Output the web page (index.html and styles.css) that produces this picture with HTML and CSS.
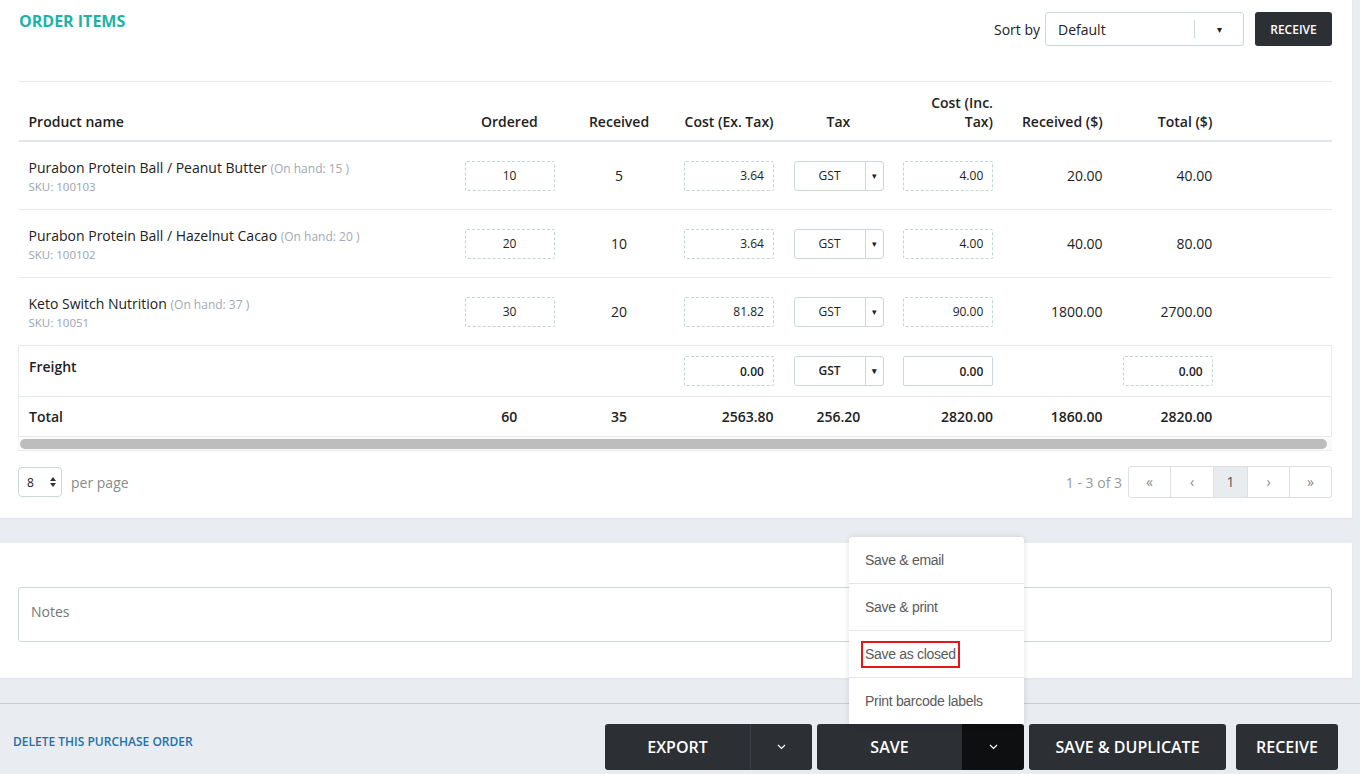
FILE: index.html
```html
<!DOCTYPE html>
<html lang="en">
<head>
	<meta charset="UTF-8">
	<title>Purchase order</title>
	<link rel="stylesheet" href="styles.css">
</head>
<body>
	<div class="card items-card">
		<div class="card-head">
			<h2 class="title">ORDER ITEMS</h2>
			<div class="head-tools">
				<span class="sort-label">Sort by</span>
				<div class="sort-select">
					<span class="sort-value">Default</span>
					<span class="sort-split"></span>
					<span class="caret">&#9662;</span>
				</div>
				<button class="btn-dark btn-small">RECEIVE</button>
			</div>
		</div>

		<table class="items-table">
			<colgroup>
				<col class="col-name">
				<col class="col-num"><col class="col-num"><col class="col-num"><col class="col-num">
				<col class="col-num"><col class="col-num"><col class="col-num">
				<col>
			</colgroup>
			<thead>
				<tr>
					<th>Product name</th>
					<th class="center">Ordered</th>
					<th class="center">Received</th>
					<th class="right nowrap">Cost (Ex. Tax)</th>
					<th class="center">Tax</th>
					<th class="right">Cost (Inc. Tax)</th>
					<th class="right">Received ($)</th>
					<th class="right">Total ($)</th>
					<th></th>
				</tr>
			</thead>
			<tbody>
				<tr>
					<td class="prod">
						<div class="prod-name">Purabon Protein Ball / Peanut Butter <span class="on-hand">(On hand: 15 )</span></div>
						<div class="sku">SKU: 100103</div>
					</td>
					<td><input class="cell-input center" value="10"></td>
					<td class="center">5</td>
					<td><input class="cell-input right" value="3.64"></td>
					<td><div class="tax-select"><span class="tax-val">GST</span><span class="tax-caret">&#9662;</span></div></td>
					<td><input class="cell-input right" value="4.00"></td>
					<td class="right">20.00</td>
					<td class="right">40.00</td>
					<td></td>
				</tr>
				<tr>
					<td class="prod">
						<div class="prod-name">Purabon Protein Ball / Hazelnut Cacao <span class="on-hand">(On hand: 20 )</span></div>
						<div class="sku">SKU: 100102</div>
					</td>
					<td><input class="cell-input center" value="20"></td>
					<td class="center">10</td>
					<td><input class="cell-input right" value="3.64"></td>
					<td><div class="tax-select"><span class="tax-val">GST</span><span class="tax-caret">&#9662;</span></div></td>
					<td><input class="cell-input right" value="4.00"></td>
					<td class="right">40.00</td>
					<td class="right">80.00</td>
					<td></td>
				</tr>
				<tr>
					<td class="prod">
						<div class="prod-name">Keto Switch Nutrition <span class="on-hand">(On hand: 37 )</span></div>
						<div class="sku">SKU: 10051</div>
					</td>
					<td><input class="cell-input center" value="30"></td>
					<td class="center">20</td>
					<td><input class="cell-input right" value="81.82"></td>
					<td><div class="tax-select"><span class="tax-val">GST</span><span class="tax-caret">&#9662;</span></div></td>
					<td><input class="cell-input right" value="90.00"></td>
					<td class="right">1800.00</td>
					<td class="right">2700.00</td>
					<td></td>
				</tr>
			</tbody>
			<tfoot>
				<tr class="freight-row">
					<td class="freight-label">Freight</td>
					<td></td>
					<td></td>
					<td><input class="cell-input right bold" value="0.00"></td>
					<td><div class="tax-select bold"><span class="tax-val">GST</span><span class="tax-caret">&#9662;</span></div></td>
					<td><input class="cell-input solid right bold" value="0.00"></td>
					<td></td>
					<td><input class="cell-input right bold" value="0.00"></td>
					<td></td>
				</tr>
				<tr class="total-row">
					<td>Total</td>
					<td class="center">60</td>
					<td class="center">35</td>
					<td class="right">2563.80</td>
					<td class="center">256.20</td>
					<td class="right">2820.00</td>
					<td class="right">1860.00</td>
					<td class="right">2820.00</td>
					<td></td>
				</tr>
			</tfoot>
		</table>
		<div class="scroll-track"><div class="scroll-thumb"></div></div>

		<div class="pager-row">
			<div class="per-page">
				<div class="per-select">
					<span>8</span>
					<svg width="6" height="10" viewBox="0 0 6 10"><path d="M0 4 L3 0 L6 4 Z M0 6 L3 10 L6 6 Z" fill="#333"/></svg>
				</div>
				<span class="per-label">per page</span>
			</div>
			<div class="pager">
				<span class="pager-info">1 - 3 of 3</span>
				<ul class="pages">
					<li class="w41">&laquo;</li>
					<li class="w43">&lsaquo;</li>
					<li class="active">1</li>
					<li class="w42">&rsaquo;</li>
					<li class="w42">&raquo;</li>
				</ul>
			</div>
		</div>
	</div>

	<div class="card notes-card">
		<div class="notes">Notes</div>
	</div>

	<div class="footer">
		<a class="delete-link" href="#">DELETE THIS PURCHASE ORDER</a>
		<div class="actions">
			<div class="btn-group">
				<button class="btn-dark btn-main btn-export">EXPORT</button>
				<button class="btn-dark btn-caret export-caret">
					<svg width="9" height="6" viewBox="0 0 9 6"><polyline points="1,1 4.5,4.5 8,1" fill="none" stroke="#fff" stroke-width="1.2"/></svg>
				</button>
			</div>
			<div class="btn-group save-group">
				<button class="btn-dark btn-main btn-save">SAVE</button>
				<button class="btn-dark btn-caret save-caret">
					<svg width="9" height="6" viewBox="0 0 9 6"><polyline points="1,1 4.5,4.5 8,1" fill="none" stroke="#fff" stroke-width="1.2"/></svg>
				</button>
				<ul class="save-menu">
					<li>Save &amp; email</li>
					<li>Save &amp; print</li>
					<li><span class="marked">Save as closed</span></li>
					<li>Print barcode labels</li>
				</ul>
			</div>
			<button class="btn-dark btn-dup">SAVE &amp; DUPLICATE</button>
			<button class="btn-dark btn-receive">RECEIVE</button>
		</div>
	</div>
</body>
</html>
```

FILE: styles.css
```css
body{
	margin: 0;
	background: #e9ecf1;
	font-family: "Open Sans", "Liberation Sans", sans-serif;
	font-size: 14px;
	color: #222;
}
ul{
	margin: 0;padding: 0;list-style: none;
}
button{
	font-family: inherit;cursor: pointer;
}

/* cards */
.card{
	background: #fff;
	width: 1352px;
	box-sizing: border-box;
	box-shadow: 0 1px 2px rgba(0,0,0,0.05);
}
.items-card{
	padding: 12px 20px 20px 18px;
}
.card-head{
	display: flex;justify-content: space-between;align-items: flex-start;
	height: 34px;margin-bottom: 35px;
}
.title{
	margin: 0 0 0 1px;
	font-size: 16px;line-height: 18px;font-weight: 700;
	color: #19b3a7;
}
.head-tools{
	display: flex;align-items: center;
}
.sort-label{
	margin-right: 5px;
}
.sort-select{
	width: 199px;height: 34px;box-sizing: border-box;
	border: 1px solid #c9d8d8;border-radius: 3px;
	display: flex;align-items: center;
	padding-left: 12px;
}
.sort-value{
	flex: 1;
}
.sort-split{
	width: 1px;height: 18px;background: #c9d8d8;
}
.caret{
	width: 48px;text-align: center;font-size: 10px;color: #222;
}
.btn-dark{
	background: #2c3035;color: #fff;border: 0;border-radius: 3px;
	font-weight: 600;
}
.btn-small{
	width: 77px;height: 34px;margin-left: 11px;font-size: 12px;
}

/* table */
.items-table{
	width: 100%;
	border-collapse: collapse;table-layout: fixed;
	border-top: 1px solid #e6e9ed;
}
.col-name{
	width: 436px;
}
.col-num{
	width: 109.7px;
}
.items-table th{
	height: 49px;padding: 0 10px 9px;
	font-weight: 600;text-align: left;vertical-align: bottom;line-height: 19px;
	border-bottom: 2px solid #e3e7ec;
}
.items-table td{
	padding: 0 10px;vertical-align: middle;
}
.items-table tbody td{
	height: 67px;border-bottom: 1px solid #e6e9ed;
}
.items-table tbody td.prod{
	padding-top: 3px;height: 64px;
}
.items-table .center{
	text-align: center;
}
.items-table .right{
	text-align: right;
}
.nowrap{
	white-space: nowrap;
}
.prod-name{
	line-height: 18px;
}
.on-hand{
	font-size: 12px;color: #a1a9b5;
}
.sku{
	font-size: 11.5px;line-height: 18px;color: #9aa3ae;
}
.cell-input{
	width: 90px;height: 30px;box-sizing: border-box;
	border: 1px dashed #c4d4d5;border-radius: 2px;
	font-family: inherit;font-size: 12px;color: #222;
	padding: 0 9px;background: #fff;display: block;
}
.cell-input.center{
	text-align: center;
}
.cell-input.right{
	text-align: right;
}
.cell-input.solid{
	border-style: solid;border-color: #c9d8d8;
}
.bold{
	font-weight: 600;
}
.tax-select{
	width: 90px;height: 30px;box-sizing: border-box;
	border: 1px solid #c9d8d8;border-radius: 3px;
	display: flex;font-size: 12px;line-height: 28px;
}
.tax-val{
	flex: 1;text-align: center;
}
.tax-caret{
	width: 17px;border-left: 1px solid #c9d8d8;text-align: center;font-size: 9px;
}
.freight-row{
	height: 51px;
}
.freight-row td{
	border-bottom: 1px solid #e6e9ed;
}
.total-row{
	height: 40px;
}
.total-row td{
	font-weight: 600;border-bottom: 1px solid #e6e9ed;
}
.items-table tfoot td:first-child{
	border-left: 1px solid #e6e9ed;
}
.items-table tfoot td:last-child{
	border-right: 1px solid #e6e9ed;
}
.items-table .freight-label{
	vertical-align: top;padding-top: 11px;font-weight: 600;line-height: 20px;
}
.scroll-track{
	height: 14px;box-sizing: border-box;padding: 2px 5px 0 2px;
	background: #fafafa;border-bottom: 1px solid #e6e9ed;
}
.scroll-thumb{
	height: 10px;border-radius: 5px;background: #bdbdbd;
}

/* pagination */
.pager-row{
	display: flex;justify-content: space-between;align-items: center;
	margin-top: 15px;height: 32px;
}
.per-page{
	display: flex;align-items: center;
}
.per-select{
	width: 44px;height: 30px;box-sizing: border-box;
	border: 1px solid #c9d9d9;border-radius: 4px;
	display: flex;align-items: center;justify-content: space-between;
	padding: 0 5px 0 8px;font-size: 12px;
}
.per-label{
	margin-left: 9px;color: #8a8a8a;
}
.pager{
	display: flex;align-items: center;
}
.pager-info{
	color: #9a9a9a;margin-right: 6px;
}
.pages{
	display: flex;height: 32px;box-sizing: border-box;
	border: 1px solid #dcdfe3;border-radius: 3px;
}
.pages li{
	width: 34px;box-sizing: border-box;line-height: 30px;text-align: center;color: #888;
	border-left: 1px solid #dcdfe3;
}
.pages li:first-child{
	border-left: 0;
}
.pages li.w41{
	width: 41px;
}
.pages li.w42{
	width: 42px;
}
.pages li.w43{
	width: 43px;
}
.pages li.active{
	background: #e9ecef;color: #555;
}

/* notes */
.notes-card{
	margin-top: 25px;padding: 44px 20px 36px 18px;
}
.notes{
	height: 55px;box-sizing: border-box;
	border: 1px solid #c9d8d8;border-radius: 3px;
	padding: 14px 12px 12px;line-height: 20px;color: #777;
}

/* footer */
.footer{
	margin-top: 25px;border-top: 1px solid #c7cbd0;
	display: flex;justify-content: space-between;align-items: flex-start;
	padding: 20px 22px 0 13px;height: 70px;box-sizing: border-box;
}
.delete-link{
	margin-top: 10px;line-height: 16px;
	font-size: 12px;font-weight: 600;color: #1f6fa6;text-decoration: none;
}
.actions{
	display: flex;
}
.actions .btn-dark{
	height: 46px;font-size: 16px;
}
.btn-group{
	display: flex;margin-right: 5px;
}
.save-group{
	position: relative;
}
.btn-main{
	width: 145px;border-radius: 3px 0 0 3px;
}
.btn-caret{
	width: 62px;border-radius: 0 3px 3px 0;
	display: flex;align-items: center;justify-content: center;
}
.export-caret{
	border-left: 1px solid #3a3f45;
}
.save-caret{
	background: #0e0f10;
}
.btn-dup{
	width: 197px;margin-right: 10px;
}
.btn-receive{
	width: 102px;
}
.save-menu{
	position: absolute;right: 0;bottom: 100%;
	width: 175px;background: #fff;
	border-radius: 3px 3px 0 0;
	box-shadow: 0 0 6px rgba(0,0,0,0.12);
	font-family: "Liberation Sans", Arial, sans-serif;
	font-size: 14px;color: #5a5a5a;letter-spacing: -0.3px;
}
.save-menu li{
	height: 46px;line-height: 46px;padding-left: 16px;
	border-top: 1px solid #e5e7ea;
}
.save-menu li:first-child{
	border-top: 0;
}
.marked{
	display: inline-block;line-height: 17px;
	border: 2px solid #e3161b;padding: 3px 2px;margin-left: -4px;
}
```
